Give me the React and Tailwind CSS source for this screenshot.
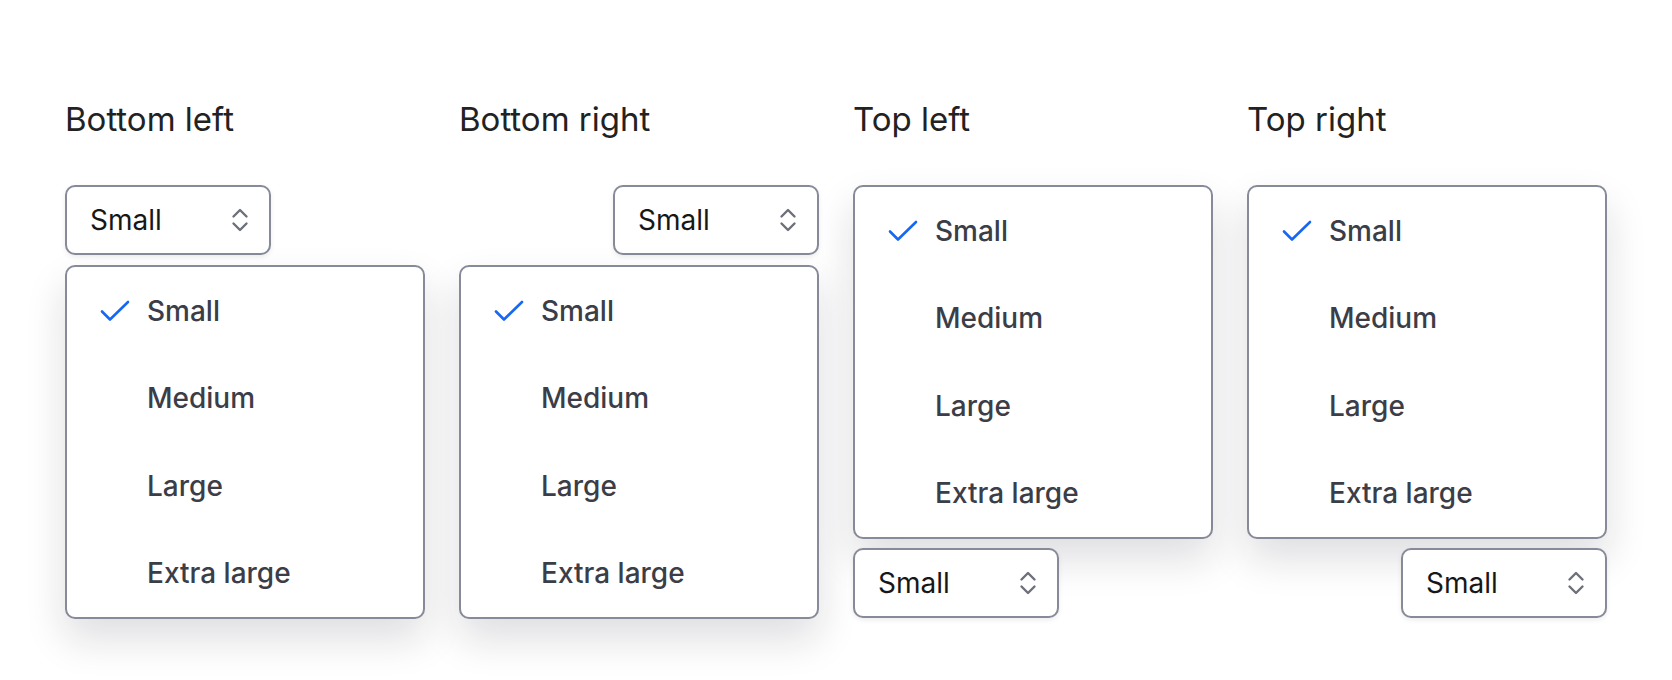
import React from 'react';

const OPTIONS = ['Small', 'Medium', 'Large', 'Extra large'];

function Chevrons() {
  return (
    <svg width="18" height="24" viewBox="0 0 18 24" fill="none" className="shrink-0">
      <path d="M2.5 8.5 L9 2 L15.5 8.5" stroke="#6d707b" strokeWidth="2.4" strokeLinecap="round" strokeLinejoin="round" />
      <path d="M2.5 15.5 L9 22 L15.5 15.5" stroke="#6d707b" strokeWidth="2.4" strokeLinecap="round" strokeLinejoin="round" />
    </svg>
  );
}

function Check() {
  return (
    <svg width="30" height="22" viewBox="0 0 30 22" fill="none">
      <path d="M2 11.5 L10 19.5 L28 2" stroke="#1767f3" strokeWidth="2.6" strokeLinecap="round" strokeLinejoin="round" />
    </svg>
  );
}

function SelectButton({ className = '' }) {
  return (
    <div
      className={`w-[206px] h-[70px] flex items-center justify-between pl-[23px] pr-[20px] bg-white border-2 border-[#878a98] rounded-[10px] shadow-[0_2px_5px_rgba(0,0,0,0.08)] ${className}`}
    >
      <span className="text-[28px] text-[#171717]">Small</span>
      <Chevrons />
    </div>
  );
}

function Menu() {
  return (
    <div className="w-[360px] h-[354px] flex flex-col bg-white border-2 border-[#878a98] rounded-[10px] shadow-[0_20px_40px_rgba(20,24,40,0.14)]">
      {OPTIONS.map((opt, i) => (
        <div key={opt} className="flex-1 flex items-center">
          <div className="w-[80px] pl-[33px] flex items-center">
            {i === 0 && <Check />}
          </div>
          <span className="text-[28px] font-medium text-[#3b3d47]">{opt}</span>
        </div>
      ))}
    </div>
  );
}

function Column({ title, children }) {
  return (
    <div className="w-[360px] flex flex-col">
      <h2 className="h-[40px] leading-[40px] text-[33px] text-[#222222] mb-[46px]">{title}</h2>
      {children}
    </div>
  );
}

export default function App() {
  return (
    <div
      className="min-h-[680px] bg-white pt-[99px] pl-[65px]"
      style={{ fontFamily: 'Inter, "Noto Sans", sans-serif' }}
    >
      <div className="flex gap-[34px]">
        <Column title="Bottom left">
          <SelectButton className="self-start" />
          <div className="mt-[10px]">
            <Menu />
          </div>
        </Column>
        <Column title="Bottom right">
          <SelectButton className="self-end" />
          <div className="mt-[10px]">
            <Menu />
          </div>
        </Column>
        <Column title="Top left">
          <Menu />
          <SelectButton className="self-start mt-[9px]" />
        </Column>
        <Column title="Top right">
          <Menu />
          <SelectButton className="self-end mt-[9px]" />
        </Column>
      </div>
    </div>
  );
}
